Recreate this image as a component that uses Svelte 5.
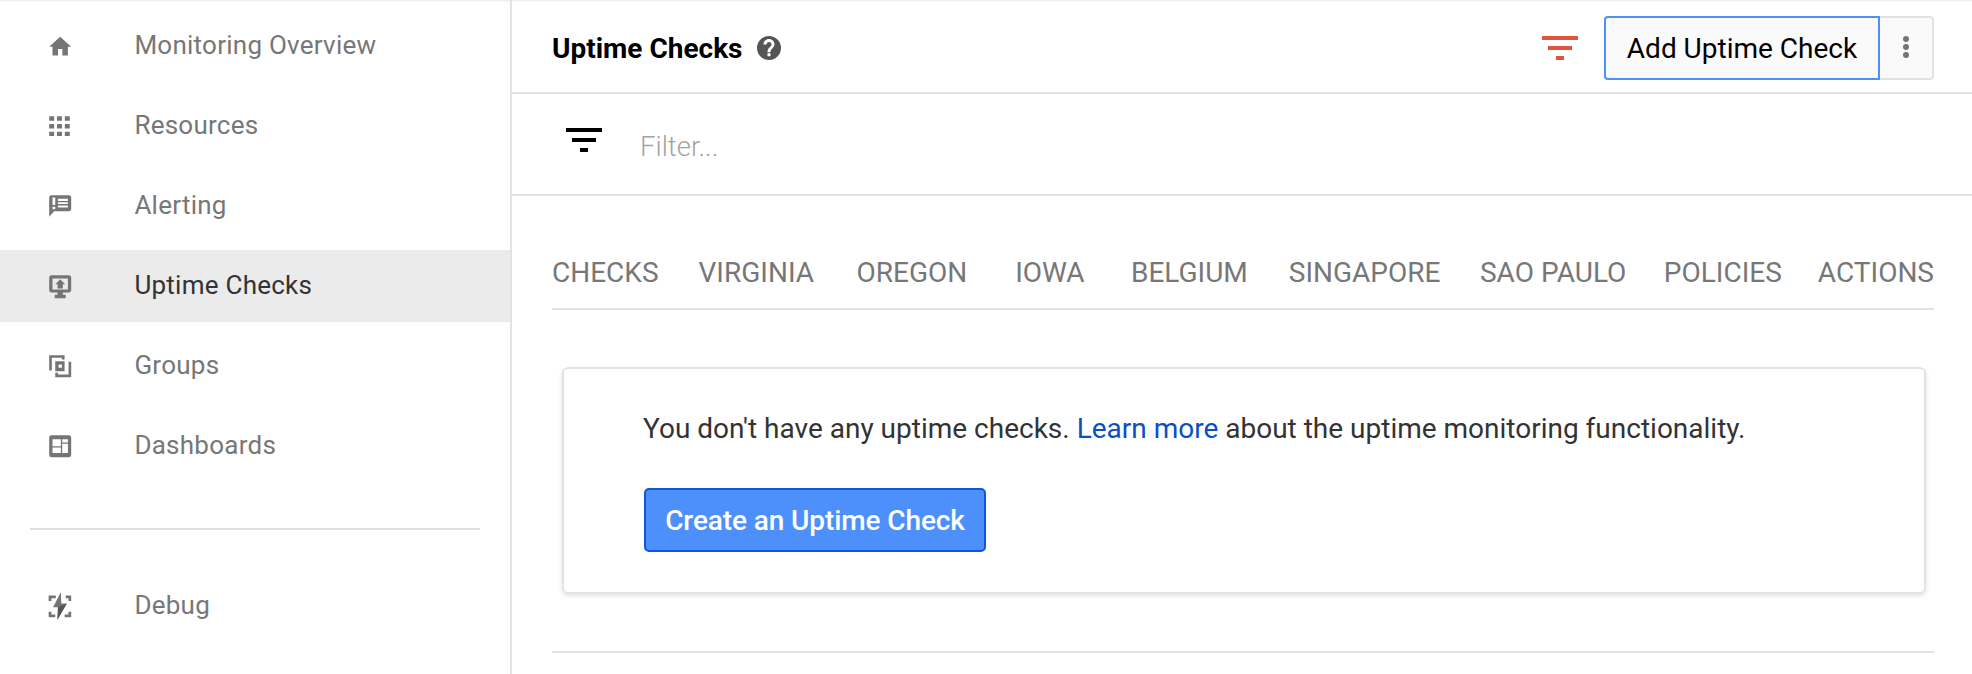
<script>
  const tabs = ['CHECKS','VIRGINIA','OREGON','IOWA','BELGIUM','SINGAPORE','SAO PAULO','POLICIES','ACTIONS'];
</script>

<div class="page">
  <aside class="side">
    <a class="row"><svg class="ic" viewBox="0 0 24 24"><path d="M10 20.500v-6h4v6h5v-8h3L12 3.500 2 12.500h3v8z"/></svg><span>Monitoring Overview</span></a>
    <a class="row"><svg class="ic" viewBox="0 0 24 24"><path d="M2 3h4.500v4H2zM9.100 3h4.500v4H9.100zM16.200 3h4.500v4h-4.500zM2 10h4.500v4H2zM9.100 10h4.500v4H9.100zM16.200 10h4.500v4h-4.500zM2 17h4.500v4H2zM9.100 17h4.500v4H9.100zM16.200 17h4.500v4h-4.500z"/></svg><span>Resources</span></a>
    <a class="row"><svg class="ic" viewBox="0 0 24 24"><path fill-rule="evenodd" d="M20 2H4C2.900 2 2 2.900 2 4v17.700L6.500 16.500H20c1.100 0 2-.9 2-2V4c0-1.100-.9-2-2-2zM5 4.100h2.500V11H5zM5 12.600h2.500v2.100H5zM9.900 5.300H19v1.900H9.900zM9.900 8.400H19v1.500H9.900zM9.900 11.400H19v1.800H9.900z"/></svg><span>Alerting</span></a>
    <a class="row active"><svg class="ic" viewBox="0 0 24 24"><path fill-rule="evenodd" d="M4 2C2.900 2 2 2.900 2 4v11.800c0 1.100.9 2 2 2h5.500v2H7V23h10v-3.200h-2.500v-2H20c1.100 0 2-.9 2-2V4c0-1.100-.9-2-2-2zM5 5h14v10H5zM12 5.600 7.500 10.200h2.100V14h4.800v-3.800h2.200z"/></svg><span>Uptime Checks</span></a>
    <a class="row"><svg class="ic" viewBox="0 0 24 24"><path fill-rule="evenodd" d="M2 2h14v4h-2.500V4.400H4.400V16H2zM7.500 7.500H16v9H7.500zM10.500 10.500v3h3v-3zM19.600 8H22v14H7.500v-4H10v1.600h9.600z"/></svg><span>Groups</span></a>
    <a class="row"><svg class="ic" viewBox="0 0 24 24"><path fill-rule="evenodd" d="M20 2H4C2.900 2 2 2.900 2 4v16c0 1.100.9 2 2 2h16c1.100 0 2-.9 2-2V4c0-1.100-.9-2-2-2zM5 5.600h7.600V12H5zM13.800 5.600H19v3h-5.200zM13.800 9.800H19v8.300h-5.200zM5 13.200h7.600v4.900H5z"/></svg><span>Dashboards</span></a>
    <hr class="rule" />
    <a class="row"><svg class="ic debug" viewBox="0 0 24 24"><path d="M1.500 2.300h6.500v2.500H4v2.500H1.500zM22 2.300h-5v2.500h2.500v2.500H22zM1.500 22h6v-2.500H4v-2.500H1.500zM22 22h-6v-2.500h3.500v-2.500H22z"/><path d="M12.600-.7 5.500 13H10l-.5 11.400L18 9.500h-5z"/><path fill="#555" d="M18 9.500 9.500 24.400 10 13z"/></svg><span>Debug</span></a>
  </aside>

  <main class="main">
    <header class="head">
      <h1>Uptime Checks</h1>
      <svg class="help" viewBox="0 0 24 24"><path d="M12 0a12 12 0 1 0 0 24 12 12 0 0 0 0-24zm1.500 20.200h-3v-3h3zm2.800-8.700-1.300 1.300c-1 1-1.500 1.700-1.500 3.400h-3v-.6c0-1.400.5-2.700 1.500-3.700l1.800-1.900c.5-.4.800-1 .8-1.700 0-1.300-1.200-2.400-2.600-2.400s-2.500 1.100-2.500 2.500h-3c0-3 2.500-5.300 5.500-5.300s5.500 2.300 5.500 5.200c0 1.200-.5 2.200-1.200 2.900z"/></svg>
      <div class="spacer"></div>
      <svg class="funnel red" viewBox="0 0 36 24"><path d="M0 0h36v4H0zM6 10h24v4H6zM14 20h8v4h-8z"/></svg>
      <div class="btns">
        <button class="add">Add Uptime Check</button>
        <button class="more" aria-label="More"><svg viewBox="0 0 6 22"><circle cx="3" cy="3" r="3"/><circle cx="3" cy="11" r="3"/><circle cx="3" cy="19" r="3"/></svg></button>
      </div>
    </header>

    <div class="filter">
      <svg class="funnel black" viewBox="0 0 36 24"><path d="M0 0h36v4H0zM6 10h24v4H6zM14 20h8v4h-8z"/></svg>
      <span class="ph">Filter...</span>
    </div>

    <div class="body">
      <nav class="tabs">
        {#each tabs as t}<span class="tab">{t}</span>{/each}
      </nav>
      <section class="card">
        <p>You don't have any uptime checks. <a class="link">Learn more</a> about the uptime monitoring functionality.</p>
        <button class="create">Create an Uptime Check</button>
      </section>
      <div class="bottom"></div>
    </div>
  </main>
</div>

<style>
  :global(body) { margin: 0; background: #fff; }
  .page { display: flex; width: 1972px; height: 674px; overflow: hidden; font-family: Roboto, sans-serif; box-shadow: inset 0 3px 2px -2px #e8e8e8; }
  .side { width: 510px; flex: none; border-right: 2px solid #e3e3e3; padding-top: 10px; box-sizing: content-box; display: flex; flex-direction: column; gap: 8px; }
  .row { display: flex; align-items: center; height: 72px; padding-left: 47px; font-size: 26px; color: #777; letter-spacing: .25px; }
  .row span { margin: -2px 0 0 61px; }
  .row.active { background: #ebebeb; color: #333; }
  .ic { width: 26.4px; height: 26.4px; fill: #757575; flex: none; overflow: visible; }
  .rule { border: 0; height: 2px; background: #e0e0e0; margin: 38px 30px 32px; width: 450px; }
  .main { flex: 1; min-width: 0; display: flex; flex-direction: column; }
  .head { box-sizing: content-box; border-bottom: 2px solid #e3e3e3; display: flex; align-items: center; padding: 4px 38px 0 40px; height: 88px; flex: none; }
  h1 { margin: 0; font-size: 28px; font-weight: 700; color: #000; }
  .help { width: 24px; height: 24px; margin-left: 15px; fill: #555; }
  .spacer { flex: 1; }
  .funnel { width: 36px; height: 24px; flex: none; }
  .funnel.red { fill: #e25241; margin-right: 26px; }
  .funnel.black { fill: #000; }
  .btns { display: flex; height: 64px; }
  button { font-family: inherit; cursor: pointer; }
  .add { width: 276px; box-sizing: border-box; height: 64px; border: 2px solid #4d8ffb; border-radius: 4px 0 0 4px; background: #fafafa; font-size: 28px; color: #000; padding: 0; }
  .more { width: 54px; height: 64px; box-sizing: border-box; border: 2px solid #e3e3e3; border-left: 0; border-radius: 0 4px 4px 0; background: #fafafa; display: flex; align-items: center; justify-content: center; padding: 0 0 2px; }
  .more svg { width: 6px; height: 22px; fill: #757575; }
  .filter { height: 100px; border-bottom: 2px solid #e3e3e3; display: flex; align-items: center; padding-left: 54px; flex: none; }
  .filter .funnel { margin-top: -8px; }
  .ph { margin-left: 38px; margin-top: 5px; font-size: 27.500px; color: #a4a4a4; font-weight: 300; }
  .body { padding: 0 38px 0 40px; }
  .tabs { height: 114px; box-sizing: border-box; border-bottom: 2px solid #e3e3e3; display: flex; align-items: center; padding-top: 40px; font-size: 28px; color: #777; }
  .tab { padding: 0 20px; text-align: center; box-sizing: border-box; white-space: nowrap; }
  .tab:nth-child(1) { padding-left: 0; }
  .tab:nth-child(3) { width: 157px; padding: 0; }
  .tab:nth-child(4) { width: 121px; padding: 0; }
  .tab:nth-child(5) { width: 160px; padding: 0; }
  .tab:nth-child(6) { padding-right: 19.500px; }
  .tab:nth-child(7) { padding-right: 17.500px; }
  .tab:nth-child(9) { padding: 0 0 0 16px; }
  .card { margin: 57px 8px 0 10px; height: 227px; box-sizing: border-box; border: 2px solid #e3e3e3; border-radius: 6px; box-shadow: 0 2px 4px rgba(0,0,0,.12); padding: 42px 79px; }
  .card p { margin: 0; font-size: 28px; line-height: 36px; color: #333; }
  .link { color: #0a4fc4; }
  .create { margin: 41px 0 0 1px; display: block; width: 342px; height: 64px; box-sizing: border-box; background: #4d8ffb; border: 2px solid #0e56dc; border-radius: 5px; color: #fff; font-size: 28px; font-weight: 500; letter-spacing: -.1px; padding: 0; }
  .bottom { margin-top: 57px; height: 2px; background: #e3e3e3; }
</style>
